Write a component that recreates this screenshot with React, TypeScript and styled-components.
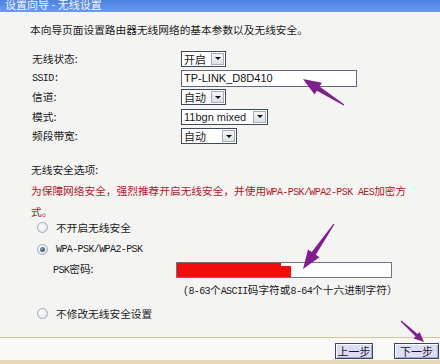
import React, { FC } from 'react';
import styled, { createGlobalStyle } from 'styled-components';

const GlobalStyle = createGlobalStyle`
  html, body {
    margin: 0;
    padding: 0;
  }
  body {
    width: 440px;
    height: 364px;
    overflow: hidden;
    font-family: "Noto Sans CJK SC", "Liberation Sans", sans-serif;
    font-size: 10.7px;
    color: #1a1a1a;
    background: #f4f4f3;
  }
`;

const Page = styled.div`
  position: relative;
  width: 440px;
  height: 364px;
  display: flex;
  flex-direction: column;
  background: #f4f4f3;
  overflow: hidden;
`;

const TitleBar = styled.div`
  height: 12px;
  padding-left: 5px;
  background: linear-gradient(#4b82de, #6a9bef);
  overflow: hidden;
`;

const TitleText = styled.div`
  margin-top: -3px;
  line-height: 14px;
  font-size: 11px;
  color: #f2f6ff;
`;

const Content = styled.div`
  flex: 1;
  display: flex;
  flex-direction: column;
  padding-left: 30px;
`;

const Intro = styled.p`
  margin: 11px 0 0;
  line-height: 14px;
`;

const Mono = styled.span`
  font-family: "Liberation Mono", monospace;
  font-size: 10px;
  letter-spacing: -0.6px;
`;

const Form = styled.div`
  margin: 12px 0 0 2px;
  display: grid;
  grid-template-columns: 149px auto;
  grid-auto-rows: 19.4px;
  align-items: center;
  justify-items: start;
`;

const Label = styled.span`
  line-height: 14px;
`;

const Select = styled.div<{ $width: number }>`
  display: flex;
  align-items: stretch;
  box-sizing: border-box;
  width: ${({ $width }) => $width}px;
  height: 16px;
  border: 1px solid #3d4a5c;
  background: #fff;
`;

const SelectValue = styled.span<{ $latin?: boolean }>`
  flex: 1;
  padding-left: 2px;
  line-height: 14px;
  font-size: 11px;
  font-family: ${({ $latin }) => ($latin ? '"Liberation Sans", sans-serif' : 'inherit')};
  white-space: nowrap;
  overflow: hidden;
`;

const SelectArrow = styled.span`
  width: 13px;
  margin: 1px;
  box-sizing: border-box;
  border: 1px solid #a3acba;
  background: linear-gradient(#f3f5f8, #dce1e8);
  display: flex;
  align-items: center;
  justify-content: center;
  &::before {
    content: '';
    border-left: 3px solid transparent;
    border-right: 3px solid transparent;
    border-top: 3px solid #111;
  }
`;

const TextInput = styled.div`
  box-sizing: border-box;
  width: 176px;
  height: 17px;
  padding-left: 2px;
  border: 1px solid #5f6977;
  background: #fff;
  font-family: "Liberation Sans", sans-serif;
  font-size: 11px;
  line-height: 15px;
  color: #111;
`;

const SectionTitle = styled.div`
  margin: 17px 0 0 1px;
  line-height: 14px;
`;

const Warning = styled.p`
  margin: 4px 0 0 1px;
  line-height: 19px;
  color: #b3171f;
`;

const OptionRow = styled.div<{ $gap: number }>`
  display: flex;
  align-items: center;
  gap: 8px;
  height: 14px;
  margin-top: ${({ $gap }) => $gap}px;
  padding-left: 7px;
  line-height: 14px;
`;

const Radio = styled.span<{ $checked?: boolean }>`
  width: 11px;
  height: 11px;
  box-sizing: border-box;
  border-radius: 50%;
  border: 1px solid #a2abb6;
  background: radial-gradient(circle at 40% 40%, #ffffff 0%, #e7eaee 65%, #ccd2d9 100%);
  display: flex;
  align-items: center;
  justify-content: center;
  &::after {
    content: '';
    width: 5px;
    height: 5px;
    border-radius: 50%;
    background: ${({ $checked }) =>
      $checked ? 'radial-gradient(circle at 35% 35%, #7c9cb8, #1d3d5c)' : 'transparent'};
  }
`;

const PskRow = styled.div`
  display: flex;
  align-items: center;
  height: 16px;
  margin-top: 5px;
  padding-left: 23px;
`;

const PskLabel = styled.span`
  width: 123px;
  line-height: 14px;
`;

const PskBox = styled.div`
  display: flex;
  box-sizing: border-box;
  width: 216px;
  height: 16px;
  border: 1px solid #6b7480;
  background: #fff;
`;

const Redaction = styled.span<{ $width: number; $height: number }>`
  width: ${({ $width }) => $width}px;
  height: ${({ $height }) => $height}px;
  align-self: flex-end;
  background: #f20c0c;
`;

const Hint = styled.div`
  margin: 5px 0 0 153px;
  line-height: 14px;
`;

const Footer = styled.div`
  display: flex;
  justify-content: flex-end;
  gap: 21px;
  padding: 5px 1px 1px 0;
  border-top: 1px solid #d8c39a;
  border-bottom: 4px solid #e7d8b8;
  background: #f9f9f8;
`;

const NavButton = styled.button<{ $width: number }>`
  width: ${({ $width }) => $width}px;
  height: 16px;
  padding: 0;
  border: 1px solid #3a4660;
  box-shadow: inset 1px 1px 0 #ffffff, inset -1px -1px 0 #a3a8cc;
  background: #dcdcf6;
  font-family: inherit;
  font-size: 11px;
  line-height: 14px;
  color: #1a1a1a;
`;

const Annotations = styled.svg`
  position: absolute;
  inset: 0;
  pointer-events: none;
`;

type Pt = [number, number];

const arrowPoints = (tail: Pt, tip: Pt, headLen: number, headW: number, tailW: number, neckW: number) => {
  const dx = tip[0] - tail[0];
  const dy = tip[1] - tail[1];
  const len = Math.hypot(dx, dy);
  const ux = dx / len;
  const uy = dy / len;
  const px = -uy;
  const py = ux;
  const nx = tip[0] - ux * headLen;
  const ny = tip[1] - uy * headLen;
  const pts: Pt[] = [
    [tail[0] + (px * tailW) / 2, tail[1] + (py * tailW) / 2],
    [nx + (px * neckW) / 2, ny + (py * neckW) / 2],
    [nx + (px * headW) / 2, ny + (py * headW) / 2],
    tip,
    [nx - (px * headW) / 2, ny - (py * headW) / 2],
    [nx - (px * neckW) / 2, ny - (py * neckW) / 2],
    [tail[0] - (px * tailW) / 2, tail[1] - (py * tailW) / 2],
  ];
  return pts.map(([x, y]) => `${x.toFixed(1)},${y.toFixed(1)}`).join(' ');
};

const arrows = [
  { tail: [344, 105] as Pt, tip: [303, 79] as Pt, head: 18, width: 14, neck: 5 },
  { tail: [334, 224] as Pt, tip: [303, 269] as Pt, head: 19, width: 14, neck: 5 },
  { tail: [401, 321] as Pt, tip: [424, 342] as Pt, head: 10, width: 9, neck: 3 },
];

const App: FC = () => (
  <>
    <GlobalStyle />
    <Page>
      <TitleBar>
        <TitleText>设置向导 - 无线设置</TitleText>
      </TitleBar>
      <Content>
        <Intro>本向导页面设置路由器无线网络的基本参数以及无线安全。</Intro>
        <Form>
          <Label>无线状态:</Label>
          <Select $width={45}>
            <SelectValue>开启</SelectValue>
            <SelectArrow />
          </Select>
          <Label>
            <Mono>SSID:</Mono>
          </Label>
          <TextInput>TP-LINK_D8D410</TextInput>
          <Label>信道:</Label>
          <Select $width={45}>
            <SelectValue>自动</SelectValue>
            <SelectArrow />
          </Select>
          <Label>模式:</Label>
          <Select $width={87}>
            <SelectValue $latin>11bgn mixed</SelectValue>
            <SelectArrow />
          </Select>
          <Label>频段带宽:</Label>
          <Select $width={56}>
            <SelectValue>自动</SelectValue>
            <SelectArrow />
          </Select>
        </Form>
        <SectionTitle>无线安全选项:</SectionTitle>
        <Warning>
          为保障网络安全，强烈推荐开启无线安全，并使用<Mono>WPA-PSK/WPA2-PSK AES</Mono>加密方
          <br />
          式。
        </Warning>
        <OptionRow $gap={0}>
          <Radio />
          <span>不开启无线安全</span>
        </OptionRow>
        <OptionRow $gap={8}>
          <Radio $checked />
          <Mono>WPA-PSK/WPA2-PSK</Mono>
        </OptionRow>
        <PskRow>
          <PskLabel>
            <Mono>PSK</Mono>密码:
          </PskLabel>
          <PskBox>
            <Redaction $width={104} $height={14} />
            <Redaction $width={10} $height={11} />
          </PskBox>
        </PskRow>
        <Hint>
          <Mono>(8-63</Mono>个<Mono>ASCII</Mono>码字符或<Mono>8-64</Mono>个十六进制字符）
        </Hint>
        <OptionRow $gap={8}>
          <Radio />
          <span>不修改无线安全设置</span>
        </OptionRow>
      </Content>
      <Footer>
        <NavButton $width={38}>上一步</NavButton>
        <NavButton $width={45}>下一步</NavButton>
      </Footer>
      <Annotations width={440} height={364} viewBox="0 0 440 364">
        {arrows.map((a, i) => (
          <polygon key={i} points={arrowPoints(a.tail, a.tip, a.head, a.width, 1.2, a.neck)} fill="#7e1f8e" />
        ))}
      </Annotations>
    </Page>
  </>
);

export default App;
